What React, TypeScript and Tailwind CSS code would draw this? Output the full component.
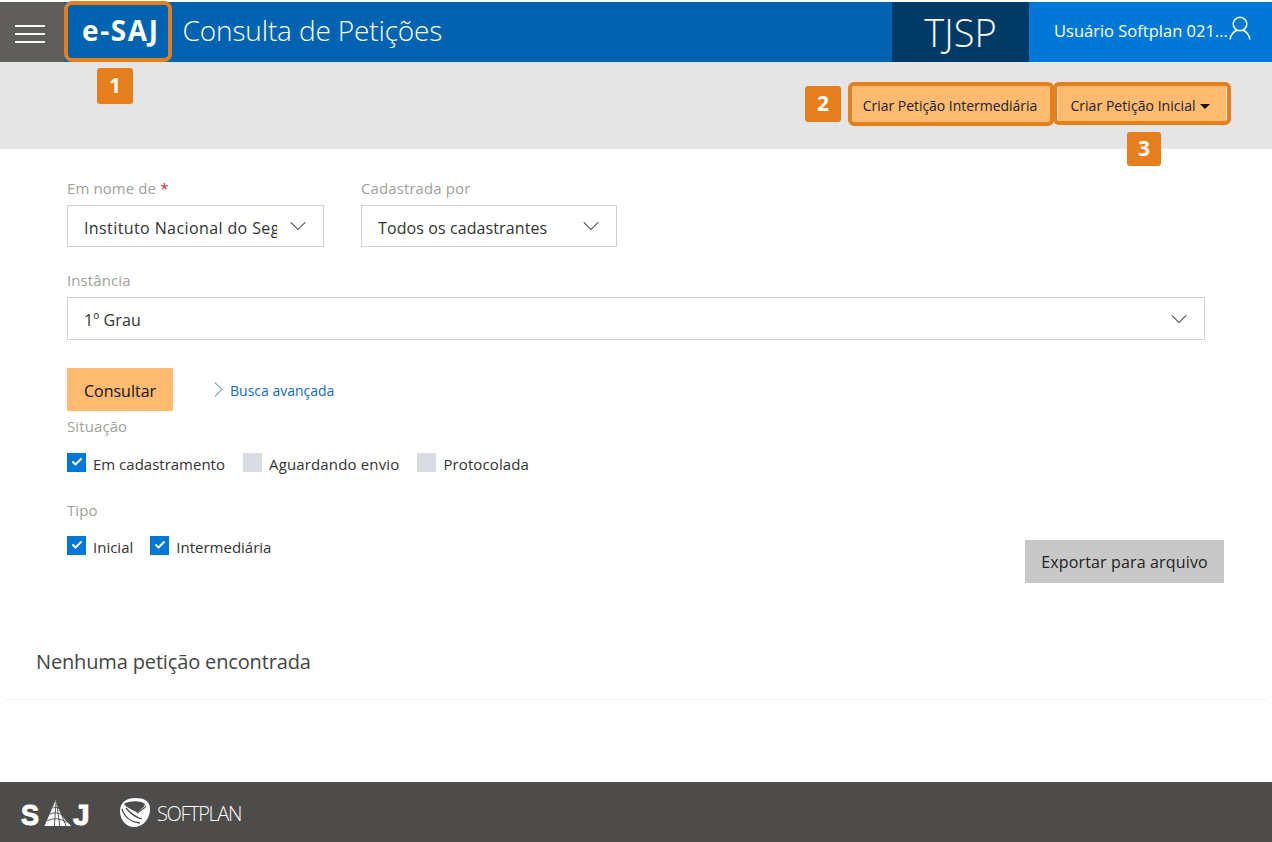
import React from 'react';
import { ChevronDown, ChevronRight, Check } from 'lucide-react';

const font = { fontFamily: '"Open Sans", "Noto Sans", sans-serif' };

function Badge({ n, className }: { n: number; className: string }) {
  return (
    <span className={`absolute flex items-center justify-center rounded-[3px] bg-[#e57f1d] text-[21px] font-bold text-white ${className}`}>
      {n}
    </span>
  );
}

function SelectBox({ value, className, textClass }: { value: string; className: string; textClass: string }) {
  return (
    <div className={`flex items-center border border-[#cdd1d8] bg-white pl-4 pr-[11px] ${className}`}>
      <span className={`flex-1 overflow-hidden whitespace-nowrap text-[16px] text-[#333] ${textClass}`}>{value}</span>
      <ChevronDown className="ml-[7px] h-7 w-7 shrink-0 text-[#333]" strokeWidth={0.9} />
    </div>
  );
}

function CheckItem({ label, checked = false, textClass = '' }: { label: string; checked?: boolean; textClass?: string }) {
  return (
    <label className="flex items-center gap-[7px]">
      <span className={`flex h-[19px] w-[19px] items-center justify-center ${checked ? 'bg-[#0078d7]' : 'bg-[#d9dce1]'}`}>
        {checked && <Check className="h-3 w-3 text-white" strokeWidth={4} />}
      </span>
      <span className={`pt-1 text-[15px] leading-[16px] text-[#333] ${textClass}`}>{label}</span>
    </label>
  );
}

function UserIcon() {
  return (
    <svg viewBox="0 0 22 24" className="-mt-[8px] ml-[1px] h-6 w-[22px]" fill="none" stroke="white" strokeWidth="1.5">
      <circle cx="11" cy="8" r="6.8" />
      <path d="M1 23.5 C2 18 5 15.5 8 14.2 M21 23.5 C20 18 17 15.5 14 14.2" />
    </svg>
  );
}

function SajLogo() {
  return (
    <div className="flex h-[27px] items-end text-[30px] font-bold leading-[22px] text-white [-webkit-text-stroke:1px_white]" style={{ fontFamily: '"Liberation Sans", sans-serif' }}>
      <span className="inline-block w-[22px] origin-left scale-x-90">S</span>
      <svg viewBox="0 0 30 30" className="h-[27px] w-[30px]" fill="none">
        <path d="M13 0 C15 12 20 22 30 30 H0 Z" fill="white" />
        <path d="M13 0 L11 30 M13 0 L17 30 M14 5 L24 30 M3 24 Q14 19 25 26 M6 17 Q13 13 20 18 M9 10 Q13 8 17 11" stroke="#4d4c4a" strokeWidth="1" />
      </svg>
      <span className="inline-block w-[17px]">J</span>
    </div>
  );
}

function SoftplanMark() {
  return (
    <svg viewBox="0 0 30 29" className="h-[29px] w-[30px]">
      <path d="M15 0 C24 0 30 3 30 11 C30 21 23 29 14 29 C6 29 0 22 0 13 C0 4 7 0 15 0 Z" fill="white" />
      <path d="M4 6 C8 3 20 2 25 6 C24 10 20 12 17 14.5 C13 12 7 10 4 6 Z" fill="#4d4c4a" />
      <path d="M2 11 C4 18 10 24 20 25 M6 10 C10 15 15 19 22 21 M17 15 C20 13 24 11 26 8" stroke="#4d4c4a" strokeWidth="1.3" fill="none" />
    </svg>
  );
}

export default function App() {
  return (
    <div className="relative flex h-[842px] w-[1272px] flex-col overflow-hidden bg-white" style={font}>
      <div className="h-[2px] bg-white" />

      {/* Header */}
      <header className="flex h-[60px] bg-[#0063b1] text-white">
        <div className="flex w-16 flex-col items-center justify-center gap-[6px] bg-[#605e5a] pr-1 pt-1">
          <span className="h-[2px] w-[30px] bg-white" />
          <span className="h-[2px] w-[30px] bg-white" />
          <span className="h-[2px] w-[30px] bg-white" />
        </div>
        <div className="ml-[18px] flex items-center pb-[4px] text-[28px] font-bold tracking-[1.6px]">e-SAJ</div>
        <div className="ml-[23px] flex flex-1 items-center pb-[4px] text-[28px] font-light tracking-[-0.15px]">Consulta de Petições</div>
        <div className="flex w-[137px] items-center justify-center bg-[#003a66] text-[38px] font-light">TJSP</div>
        <div className="flex w-[243px] items-center bg-[#0078d7] pl-[25px]">
          <span className="pb-[2px] text-[16.5px]">Usuário Softplan 021...</span>
          <UserIcon />
        </div>
      </header>

      {/* Action bar */}
      <div className="flex h-[87px] items-start justify-end bg-[#e5e5e5] pr-[46px] pt-[24px]">
        <button className="flex h-[38px] w-[200px] items-center justify-center rounded-[3px] bg-[#ffbb6f] text-[14px] tracking-[-0.03px] text-[#222]">
          Criar Petição Intermediária
        </button>
        <button className="ml-[8px] flex h-[38px] w-[168px] items-center justify-center gap-1 bg-[#ffbb6f] pr-[4px] text-[14px] tracking-[0.05px] text-[#222]">
          Criar Petição Inicial
          <span className="mt-[3px] h-0 w-0 border-x-[5px] border-t-[5px] border-x-transparent border-t-[#111]" />
        </button>
      </div>

      {/* Form */}
      <main className="flex flex-1 flex-col">
        <div className="flex flex-col pl-[67px] pr-[67px] pt-[28px]">
          <div className="flex gap-[37px]">
            <div className="flex flex-col">
              <span className="mb-[5px] h-[23px] text-[15px] tracking-[0.1px] text-[#a19f9d]">
                Em nome de <span className="text-[#c4314b]">*</span>
              </span>
              <SelectBox value="Instituto Nacional do Seguro Social" className="h-[42px] w-[257px]" textClass="pt-1 tracking-[0.4px]" />
            </div>
            <div className="flex flex-col">
              <span className="mb-[5px] h-[23px] text-[15px] tracking-[0.1px] text-[#a19f9d]">Cadastrada por</span>
              <SelectBox value="Todos os cadastrantes" className="h-[42px] w-[256px]" textClass="pt-1 tracking-[0.1px]" />
            </div>
          </div>

          <span className="mb-[5px] mt-[22px] h-[23px] text-[15px] tracking-[0.1px] text-[#a19f9d]">Instância</span>
          <SelectBox value="1º Grau" className="h-[43px] w-[1138px]" textClass="pt-[2px] tracking-[0.1px]" />

          <div className="mt-[28px] flex items-center">
            <button className="h-[43px] w-[106px] bg-[#ffbb6f] pt-[2px] text-[16px] text-[#111]">Consultar</button>
            <ChevronRight className="ml-[32px] h-[27px] w-[27px] text-[#5a7fc0]" strokeWidth={0.9} />
            <a className="ml-[-2px] pt-[2px] text-[14px] text-[#0f6cc4]">Busca avançada</a>
          </div>

          <span className="mt-[4px] h-[21px] text-[15px] tracking-[0.1px] text-[#a19f9d]">Situação</span>
          <div className="mt-[16px] flex gap-[18px]">
            <CheckItem label="Em cadastramento" checked />
            <CheckItem label="Aguardando envio" textClass="tracking-[0.15px]" />
            <CheckItem label="Protocolada" textClass="tracking-[0.1px]" />
          </div>

          <span className="mt-[27px] h-[21px] text-[15px] tracking-[0.1px] text-[#a19f9d]">Tipo</span>
          <div className="flex items-start justify-between">
            <div className="mt-[15px] flex gap-[17px]">
              <CheckItem label="Inicial" checked />
              <CheckItem label="Intermediária" checked />
            </div>
            <button className="mr-[-19px] mt-[20px] h-[43px] w-[199px] bg-[#c8c8c8] pt-[1px] text-[16px] tracking-[0.15px] text-[#222]">
              Exportar para arquivo
            </button>
          </div>
        </div>

        <div className="mx-[5px] mt-[66px] border-b border-[#f3f3f3] pb-[24px] pl-[31px] text-[20px] leading-[26px] tracking-[-0.15px] text-[#444]">
          Nenhuma petição encontrada
        </div>
      </main>

      {/* Footer */}
      <footer className="flex h-[60px] items-center bg-[#4d4c4a] pl-[21px]">
        <SajLogo />
        <div className="ml-[30px] flex items-center gap-[7px]">
          <SoftplanMark />
          <span className="pt-[3px] text-[20px] font-light tracking-[-1.4px] text-white">SOFTPLAN</span>
        </div>
      </footer>

      {/* Tutorial highlights */}
      <span className="absolute left-[64px] top-[1px] h-[61px] w-[108px] rounded-[8px] border-4 border-[#e57f1d]" />
      <span className="absolute left-[848px] top-[82px] h-[44px] w-[206px] rounded-[6px] border-4 border-[#e57f1d]" />
      <span className="absolute left-[1053px] top-[82px] h-[43px] w-[178px] rounded-[6px] border-4 border-[#e57f1d]" />
      <Badge n={1} className="left-[97px] top-[68px] h-9 w-9" />
      <Badge n={2} className="left-[805px] top-[86px] h-9 w-9" />
      <Badge n={3} className="left-[1127px] top-[132px] h-[34px] w-[34px]" />
    </div>
  );
}
